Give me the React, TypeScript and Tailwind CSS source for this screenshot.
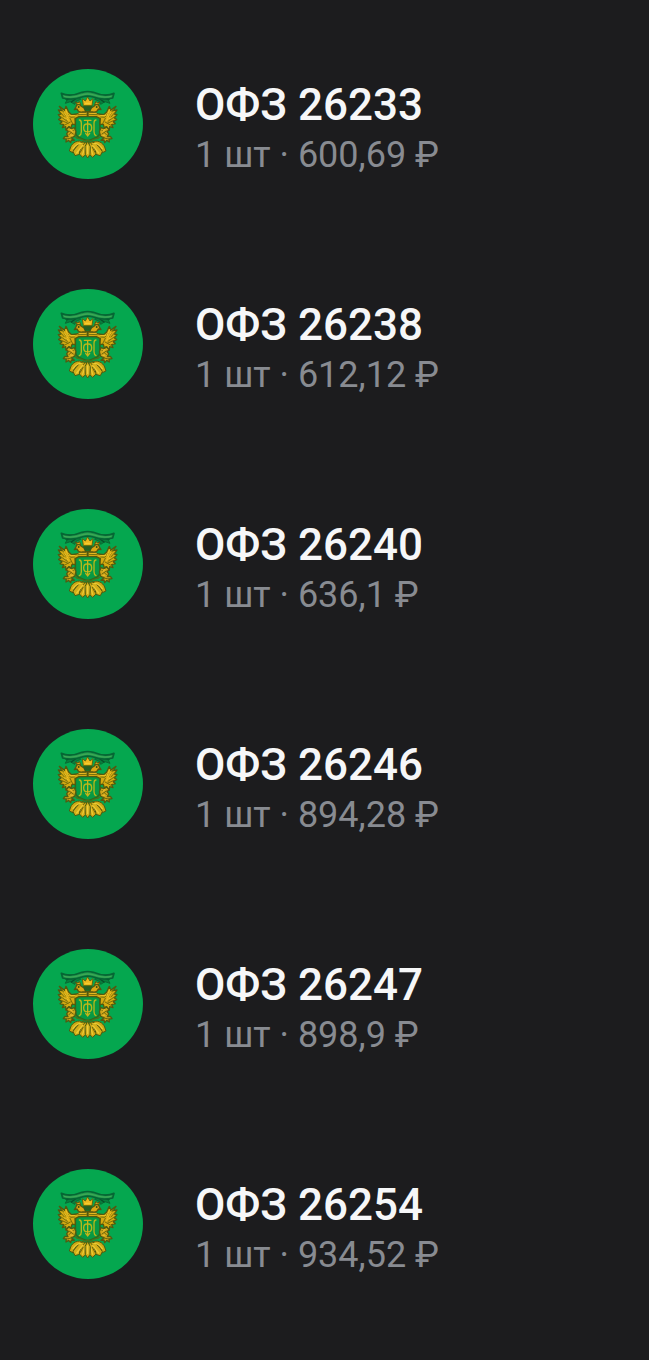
// Bond positions list: round issuer badge, name, quantity and price.

interface Bond {
  name: string;
  quantity: number;
  price: string;
}

const BONDS: Bond[] = [
  { name: "ОФЗ 26233", quantity: 1, price: "600,69" },
  { name: "ОФЗ 26238", quantity: 1, price: "612,12" },
  { name: "ОФЗ 26240", quantity: 1, price: "636,1" },
  { name: "ОФЗ 26246", quantity: 1, price: "894,28" },
  { name: "ОФЗ 26247", quantity: 1, price: "898,9" },
  { name: "ОФЗ 26254", quantity: 1, price: "934,52" },
];

// Left half of the eagle; the right half is the same drawing flipped.
function EagleHalf() {
  return (
    <g strokeLinejoin="round" strokeLinecap="round">
      {/* ribbon end */}
      <path d="M39 33 L50 50 L46 58 L61 53 L74 61 L78 52 L92 46 L84 36 Z" fill="#087f3d" stroke="#0b6932" strokeWidth="3" />
      <path d="M51 47 L62 43 M64 54 L77 44" stroke="#07512a" strokeWidth="4" />
      {/* wing and feathers */}
      <path
        d="M28 67 L37 80 L25 78 L33 90 L25 92 L33 102 L26 106 L36 113 L30 119 L41 122 L37 131 L47 128
          L48 138 L57 128 L63 132 L66 121 L76 121 L75 104 L87 98 L112 97 L112 83 L94 84 L80 90 L65 92
          L56 84 L48 67 L44 79 Z"
        fill="#d6a911"
        stroke="#52590f"
        strokeWidth="4"
      />
      <path
        d="M35 75 L49 98 M32 86 L49 106 M32 98 L52 112 M34 109 L54 118 M43 124 L61 114 M60 103 L68 119
          M52 88 L62 100 L74 99 M84 92 L110 91"
        fill="none"
        stroke="#75700d"
        strokeWidth="3"
      />
      <path
        d="M47 77 L55 95 M42 85 L54 103 M43 101 L57 109 M59 94 L74 95 M87 88 L108 87"
        fill="none"
        stroke="#edc028"
        strokeWidth="3"
      />
      {/* head */}
      <path
        d="M98 84 C90 86 83 81 81 75 L73 77 L78 69 C78 60 89 58 93 66 L102 72 L108 84 Z"
        fill="#dba713"
        stroke="#55550f"
        strokeWidth="4"
      />
      <path d="M80 61 L77 54 L84 57 L88 52 L92 61 Z" fill="#d3a517" stroke="#585a10" strokeWidth="3" />
      <circle cx="86" cy="69" r="3" fill="#365313" />
      {/* leg and claw */}
      <path
        d="M56 129 L64 134 L73 131 L78 143 L74 157 L64 161 L73 169 L64 168 L62 176 L56 169 L48 174
          L49 165 L40 164 L45 157 L54 158 L50 149 L55 143 L49 137 Z"
        fill="#cfa518"
        stroke="#515b12"
        strokeWidth="4"
      />
      <path d="M57 141 L70 150 M70 139 L57 152 M50 165 L64 162" stroke="#6c680e" strokeWidth="3" />
      <path d="M62 137 L67 143 M62 153 L67 155" stroke="#e8ba2b" strokeWidth="4" />
      {/* tail feathers, outermost first */}
      <path
        d="M100 174 C84 166 67 176 62 189 L58 201 L69 206 L82 193 L102 180 Z"
        fill="#cfa915"
        stroke="#4b5c12"
        strokeWidth="3"
      />
      <path d="M103 174 C86 174 76 190 69 203 L75 215 L89 211 L104 186 Z" fill="#d6af18" stroke="#4b5c12" strokeWidth="3" />
      <path d="M107 174 C97 182 89 196 88 210 L98 220 L108 211 L110 184 Z" fill="#d4a913" stroke="#4b5c12" strokeWidth="3" />
      <path d="M94 178 C80 178 74 186 69 194 M98 184 L80 207 M105 187 L98 211" fill="none" stroke="#ebca35" strokeWidth="4" />
      <path d="M84 184 L71 198 M91 205 L99 190" stroke="#6a650e" strokeWidth="3" />
      {/* left bar and bow of the monogram */}
      <path
        d="M88 108 C93 108 94 112 94 118 V143 C94 150 92 153 88 155 M111 120 C103 120 101 125 101 131 C101 138 103 143 111 143"
        fill="none"
        stroke="#b5b81a"
        strokeWidth="4"
      />
    </g>
  );
}

function Emblem() {
  return (
    <svg viewBox="-51 -45 330 330" className="size-full" aria-hidden="true">
      {/* shield */}
      <path
        d="M76 97 H150 V145 C150 158 138 161 113 171 C88 161 76 158 76 145 Z"
        fill="#079944"
        stroke="#2c6a1c"
        strokeWidth="5"
      />
      <EagleHalf />
      <g transform="translate(226 0) scale(-1 1)">
        <EagleHalf />
      </g>
      {/* shield foot with its scrolls */}
      <path
        d="M76 158 C83 168 91 162 99 168 C106 173 109 171 113 167 C117 171 120 173 127 168 C135 162 143 168 150 158"
        fill="none"
        stroke="#49711b"
        strokeWidth="4"
      />
      {/* centre tail feather */}
      <path d="M113 172 L121 188 L120 211 L113 222 L106 211 L105 188 Z" fill="#d4af1a" stroke="#4b5c12" strokeWidth="3" />
      <path d="M113 184 V210" stroke="#edcd3c" strokeWidth="4" />
      {/* centre of the monogram */}
      <path
        d="M103 109 H123 M113 109 V155 M107 148 L113 156 L119 148"
        fill="none"
        stroke="#c4b51a"
        strokeWidth="4"
        strokeLinecap="round"
      />
      {/* crown */}
      <path d="M98 64 H128 L121 80 H105 Z" fill="#275f20" />
      <path
        d="M97 44 L106 51 L113 39 L120 51 L129 44 L126 65 H100 Z"
        fill="#efb91b"
        stroke="#5d680f"
        strokeWidth="3"
        strokeLinejoin="round"
      />
      <path d="M105 58 H121" stroke="#f3cd32" strokeWidth="4" />
      {/* ribbon */}
      <path
        d="M34 28 C55 38 77 33 96 25 Q113 20 130 25 C149 33 171 38 192 28 L188 42
          C169 47 148 46 130 39 Q113 34 96 39 C78 46 57 47 38 42 Z"
        fill="#20984a"
        stroke="#066634"
        strokeWidth="5"
        strokeLinejoin="round"
      />
      <path d="M42 37 C63 42 82 38 98 32 Q113 28 128 32 C144 38 163 42 184 37" fill="none" stroke="#3ca755" strokeWidth="4" />
    </svg>
  );
}

function BondRow({ bond }: { bond: Bond }) {
  return (
    <li className="flex items-start gap-[52px]">
      <div className="size-[110px] shrink-0 overflow-hidden rounded-full bg-[#05a74f]">
        <Emblem />
      </div>
      <div className="min-w-0 pt-2">
        <h2 className="text-[44px] leading-[56px] font-medium text-[#f6f7f8]">{bond.name}</h2>
        <p className="text-[36px] leading-[44px] text-[#888b91]">
          {bond.quantity} шт · {bond.price} ₽
        </p>
      </div>
    </li>
  );
}

export default function App() {
  return (
    <main className="min-h-screen bg-[#1c1c1e] font-['Roboto',sans-serif]">
      <ul className="flex flex-col gap-[110px] px-[33px] pt-[69px] pb-[81px]">
        {BONDS.map((bond) => (
          <BondRow key={bond.name} bond={bond} />
        ))}
      </ul>
    </main>
  );
}
